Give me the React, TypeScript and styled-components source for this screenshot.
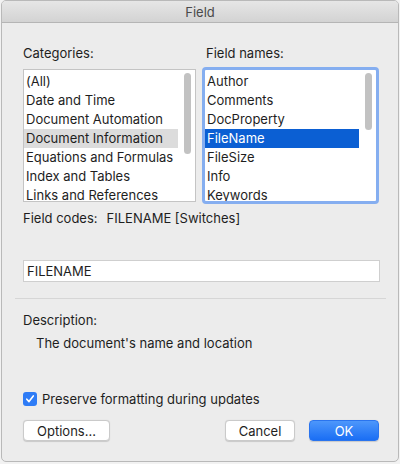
import React, { useState } from 'react';
import styled, { createGlobalStyle } from 'styled-components';

const GlobalStyle = createGlobalStyle`
  html, body {
    margin: 0;
    padding: 0;
    background: #f2f2f2;
  }
  body {
    font-family: Inter, "Noto Sans", "Liberation Sans", sans-serif;
    font-size: 13px;
    color: #1e1e1e;
  }
`;

const Window = styled.div`
  box-sizing: border-box;
  width: 398px;
  height: 462px;
  margin-left: 1px;
  border: 1px solid #b9b9b9;
  border-radius: 5px;
  background: #ececec;
  overflow: hidden;
  display: flex;
  flex-direction: column;
`;

const TitleBar = styled.div`
  height: 22px;
  flex: 0 0 22px;
  box-sizing: border-box;
  background: linear-gradient(#e6e6e6, #d3d3d3);
  border-bottom: 1px solid #b5b5b5;
  display: flex;
  align-items: center;
  justify-content: center;
  color: #4a4a4a;
  font-size: 13px;
`;

const Content = styled.div`
  padding: 22px 19px 0 21px;
  display: flex;
  flex-direction: column;
`;

const Columns = styled.div`
  display: flex;
  gap: 6px;
`;

const Column = styled.div<{ $w: number }>`
  width: ${(p) => p.$w}px;
  display: flex;
  flex-direction: column;
`;

const Label = styled.div<{ $indent?: number }>`
  line-height: 16px;
  padding-left: ${(p) => p.$indent ?? 0}px;
`;

const ListFrame = styled.div<{ $focus?: boolean }>`
  box-sizing: border-box;
  position: relative;
  height: ${(p) => (p.$focus ? 137 : 133)}px;
  margin-top: ${(p) => (p.$focus ? 6 : 8)}px;
  border: ${(p) => (p.$focus ? '3px solid #85aef0' : '1px solid #c4c4c4')};
  border-radius: ${(p) => (p.$focus ? 4 : 0)}px;
  background: #fff;
  overflow: hidden;
  padding-top: 2px;
`;

const Row = styled.div<{ $sel?: 'gray' | 'blue' }>`
  height: 19px;
  line-height: 19px;
  padding-left: 2px;
  margin-right: 17px;
  white-space: nowrap;
  background: ${(p) =>
    p.$sel === 'blue' ? '#0b5fd3' : p.$sel === 'gray' ? '#dcdcdc' : 'transparent'};
  color: ${(p) => (p.$sel === 'blue' ? '#fff' : '#1e1e1e')};
`;

const Thumb = styled.div<{ $top: number; $h: number }>`
  position: absolute;
  right: 4px;
  top: ${(p) => p.$top}px;
  width: 7px;
  height: ${(p) => p.$h}px;
  border-radius: 4px;
  background: #c2c2c2;
`;

const CodesRow = styled.div`
  margin-top: 6px;
  line-height: 16px;
  display: flex;
  gap: 9px;
`;

const Input = styled.input`
  box-sizing: border-box;
  margin-top: 34px;
  width: 357px;
  height: 22px;
  border: 1px solid #cfcfcf;
  background: #fff;
  font: inherit;
  color: #1e1e1e;
  padding: 0 3px;
  outline: none;
`;

const Separator = styled.hr`
  margin: 16px -7px 0 -8px;
  border: none;
  border-top: 1px solid #d6d6d6;
  height: 0;
`;

const DescLabel = styled(Label)`
  margin-top: 13px;
`;

const DescText = styled.div`
  margin-top: 7px;
  padding-left: 13px;
  line-height: 16px;
`;

const CheckRow = styled.label`
  margin-top: 40px;
  display: flex;
  align-items: center;
  gap: 5px;
  line-height: 16px;
`;

const CheckBox = styled.span`
  width: 14px;
  height: 14px;
  border-radius: 3px;
  background: #2e7cf6;
  display: flex;
  align-items: center;
  justify-content: center;
`;

const Buttons = styled.div`
  margin-top: 13px;
  display: flex;
  align-items: center;
`;

const Spacer = styled.div`
  flex: 1;
`;

const Button = styled.button<{ $primary?: boolean; $w: number }>`
  box-sizing: border-box;
  width: ${(p) => p.$w}px;
  height: 21px;
  margin-left: ${(p) => (p.$primary ? 14 : 0)}px;
  border-radius: 4px;
  border: 1px solid ${(p) => (p.$primary ? '#2a74ee' : '#cacaca')};
  background: ${(p) => (p.$primary ? 'linear-gradient(#4d97fb, #1a6ef4)' : '#fff')};
  color: ${(p) => (p.$primary ? '#fff' : '#1e1e1e')};
  font: inherit;
  font-size: 13px;
  padding: 0;
  box-shadow: 0 0.5px 1px rgba(0, 0, 0, 0.15);
`;

const categories = [
  '(All)',
  'Date and Time',
  'Document Automation',
  'Document Information',
  'Equations and Formulas',
  'Index and Tables',
  'Links and References',
];

const fieldNames = ['Author', 'Comments', 'DocProperty', 'FileName', 'FileSize', 'Info', 'Keywords'];

export default function App() {
  const [category] = useState('Document Information');
  const [field] = useState('FileName');

  return (
    <>
      <GlobalStyle />
      <Window>
        <TitleBar>Field</TitleBar>
        <Content>
          <Columns>
            <Column $w={174}>
              <Label>Categories:</Label>
              <ListFrame>
                {categories.map((c) => (
                  <Row key={c} $sel={c === category ? 'gray' : undefined}>
                    {c}
                  </Row>
                ))}
                <Thumb $top={3} $h={81} />
              </ListFrame>
            </Column>
            <Column $w={178}>
              <Label $indent={4}>Field names:</Label>
              <ListFrame $focus>
                {fieldNames.map((f) => (
                  <Row key={f} $sel={f === field ? 'blue' : undefined}>
                    {f}
                  </Row>
                ))}
                <Thumb $top={3} $h={57} />
              </ListFrame>
            </Column>
          </Columns>
          <CodesRow>
            <span>Field codes:</span>
            <span>FILENAME [Switches]</span>
          </CodesRow>
          <Input defaultValue="FILENAME" />
          <Separator />
          <DescLabel>Description:</DescLabel>
          <DescText>The document's name and location</DescText>
          <CheckRow>
            <CheckBox>
              <svg width="10" height="10" viewBox="0 0 10 10">
                <path d="M1.8 5.2 L4 7.6 L8.3 1.9" fill="none" stroke="#fff" strokeWidth="1.6" strokeLinecap="round" strokeLinejoin="round" />
              </svg>
            </CheckBox>
            Preserve formatting during updates
          </CheckRow>
          <Buttons>
            <Button $w={87}>Options...</Button>
            <Spacer />
            <Button $w={70}>Cancel</Button>
            <Button $w={70} $primary>OK</Button>
          </Buttons>
        </Content>
      </Window>
    </>
  );
}
